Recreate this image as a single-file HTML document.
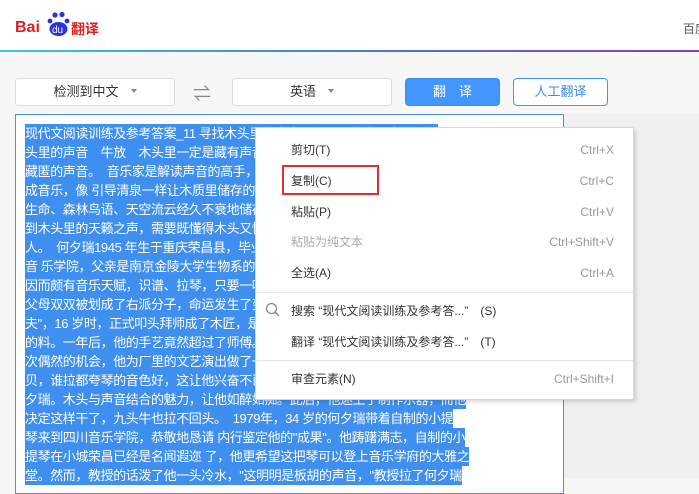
<!DOCTYPE html>
<html><head><meta charset="utf-8"><style>
*{margin:0;padding:0;box-sizing:border-box}
body{width:699px;height:478px;overflow:hidden;background:#f7f7f7;font-family:"Liberation Sans","Noto Sans CJK SC",sans-serif;position:relative}
.hdr{position:absolute;left:0;top:0;width:699px;height:50px;background:#fff}
.line{position:absolute;left:0;top:50px;width:699px;height:2px;background:linear-gradient(90deg,#3cc8d8,#4a6fd8 60%,#8a3bc8)}
.dd{position:absolute;top:78px;height:28px;background:#fff;border:1px solid #ddd;border-radius:3px;font-size:13px;color:#333;text-align:center;line-height:26px}
.dd:after{content:"";display:inline-block;margin-left:12px;border:3px solid transparent;border-top:4px solid #888;vertical-align:middle}
.btn{position:absolute;top:78px;height:28px;border-radius:4px;font-size:13px;text-align:center;line-height:26px}
.box{position:absolute;left:15px;top:114px;width:549px;height:380px;background:#fff;border:1px solid #4a90e2}
.rp{position:absolute;left:564px;top:114px;width:135px;height:364px;background:#f0f0f0}
.txt{position:absolute;left:25px;top:124px;font-size:13px;line-height:19px;color:#fff;white-space:nowrap;letter-spacing:-0.4px}
.txt span{background:#3e8ff0;display:inline-block;height:19px}
.menu{position:absolute;left:255px;top:127px;width:379px;height:273px;background:#fff;border:1px solid #d8d8d8;box-shadow:2px 2px 4px rgba(0,0,0,.15);font-size:12px;color:#333}
.mi{position:absolute;left:35px;height:20px;line-height:20px;width:323px}
.mi b{font-weight:normal;position:absolute;right:0;color:#999}
.sep{position:absolute;left:0;width:377px;height:1px;background:#e4e4e4}
</style></head><body>
<div class="hdr">
<div style="position:absolute;left:15px;top:19px;font:bold 16px 'Liberation Sans',sans-serif;color:#e02020">Bai</div>
<div style="position:absolute;left:46px;top:11px;width:26px;height:26px">
<svg width="26" height="26"><circle cx="9" cy="4" r="2.6" fill="#2932e1"/><circle cx="16" cy="3.5" r="2.6" fill="#2932e1"/><circle cx="4" cy="10" r="2.4" fill="#2932e1"/><circle cx="21" cy="10" r="2.4" fill="#2932e1"/><ellipse cx="12.5" cy="18" rx="9" ry="7" fill="#2932e1"/><text x="6" y="22" font-size="10" fill="#fff" font-family="Liberation Sans">du</text></svg></div>
<div style="position:absolute;left:71px;top:19px;font-size:14px;font-weight:bold;color:#e02020">翻译</div>
<div style="position:absolute;left:683px;top:20px;font-size:12px;color:#555;white-space:nowrap">百度</div>
</div>
<div class="line"></div>
<div class="dd" style="left:15px;width:160px">检测到中文</div>
<div style="position:absolute;left:193px;top:80px;font-size:18px;color:#888">⇌</div>
<div class="dd" style="left:232px;width:160px">英语</div>
<div class="btn" style="left:405px;width:95px;background:#4395ff;color:#fff;border:1px solid #3a8cf5">翻　译</div>
<div class="btn" style="left:513px;width:95px;background:#fff;color:#3a8cf5;border:1px solid #4395ff">人工翻译</div>
<div class="box"></div><div class="rp"></div>
<div class="txt">
<span>现代文阅读训练及参考答案_11 寻找木头里的声音　作者：佚名　木头里的</span><br>
<span>头里的声音　牛放　木头里一定是藏有声音的，只是需要一个人去</span><br>
<span>藏匿的声音。　音乐家是解读声音的高手，他们能把声音变成</span><br>
<span>成音乐，像 引导清泉一样让木质里储存的声音流淌出来</span><br>
<span>生命、森林鸟语、天空流云经久不衰地储存在木头</span><br>
<span>到木头里的天籁之声，需要既懂得木头又懂得声音</span><br>
<span>人。　何夕瑞1945 年生于重庆荣昌县，毕业于四川</span><br>
<span>音 乐学院，父亲是南京金陵大学生物系的教授</span><br>
<span>因而颇有音乐天赋，识谱、拉琴，只要一听就会</span><br>
<span>父母双双被划成了右派分子，命运发生了变化</span><br>
<span>夫"，16 岁时，正式叩头拜师成了木匠，是块做</span><br>
<span>的料。一年后，他的手艺竟然超过了师傅。一</span><br>
<span>次偶然的机会，他为厂里的文艺演出做了一把</span><br>
<span>贝，谁拉都夸琴的音色好，这让他兴奋不已何</span><br>
<span>夕瑞。木头与声音结合的魅力，让他如醉如痴。此后，他迷上了制作乐器，而他</span><br>
<span>决定这样干了，九头牛也拉不回头。　1979年，34 岁的何夕瑞带着自制的小提</span><br>
<span>琴来到四川音乐学院，恭敬地恳请 内行鉴定他的"成果"。他踌躇满志，自制的小</span><br>
<span>提琴在小城荣昌已经是名闻遐迩 了，他更希望这把琴可以登上音乐学府的大雅之</span><br>
<span>堂。然而，教授的话泼了他一头冷水，"这明明是板胡的声音，"教授拉了何夕瑞</span>
</div>
<div class="menu">
<div class="mi" style="top:12px">剪切(T)<b>Ctrl+X</b></div>
<div class="mi" style="top:43px">复制(C)<b>Ctrl+C</b></div>
<div style="position:absolute;left:26px;top:37px;width:97px;height:30px;border:2px solid #e03030"></div>
<div class="mi" style="top:74px">粘贴(P)<b>Ctrl+V</b></div>
<div class="mi" style="top:104px;color:#aaa">粘贴为纯文本<b>Ctrl+Shift+V</b></div>
<div class="mi" style="top:135px">全选(A)<b>Ctrl+A</b></div>
<div class="sep" style="top:164px"></div>
<svg style="position:absolute;left:9px;top:174px" width="16" height="16"><circle cx="6.5" cy="6.5" r="5" fill="none" stroke="#888" stroke-width="1.3"/><line x1="10" y1="10" x2="14" y2="14" stroke="#888" stroke-width="1.5"/></svg>
<div class="mi" style="top:173px">搜索 “现代文阅读训练及参考答...”　(S)</div>
<div class="mi" style="top:204px">翻译 “现代文阅读训练及参考答...”　(T)</div>
<div class="sep" style="top:232px"></div>
<div class="mi" style="top:241px">审查元素(N)<b>Ctrl+Shift+I</b></div>
</div>
</body></html>
